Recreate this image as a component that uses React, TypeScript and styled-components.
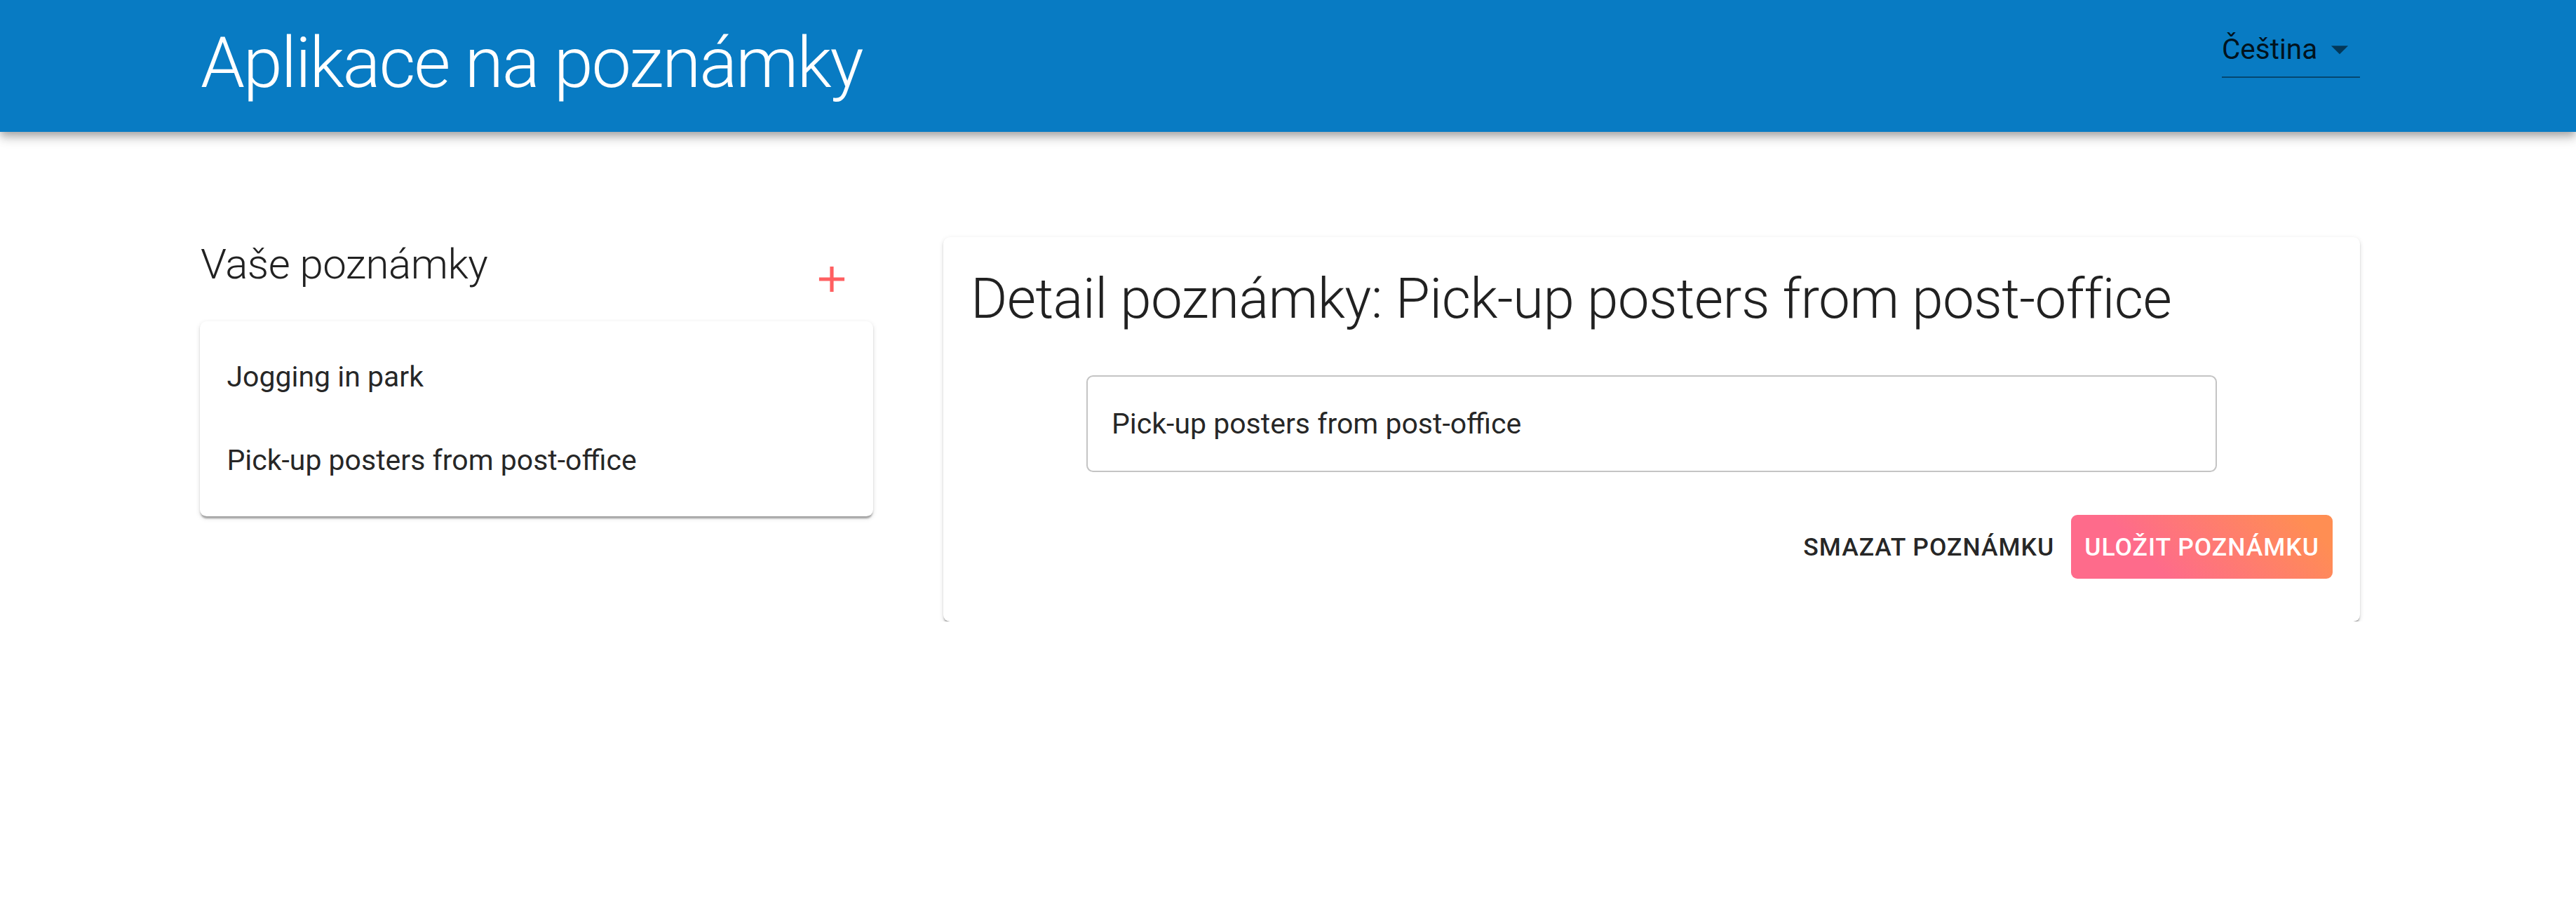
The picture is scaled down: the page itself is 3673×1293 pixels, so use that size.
import React from "react";
import styled, { createGlobalStyle } from "styled-components";

const GlobalStyle = createGlobalStyle`
  html, body {
    margin: 0;
    padding: 0;
    background: #ffffff;
    font-family: Roboto, "Noto Sans", "Liberation Sans", sans-serif;
    color: rgba(0, 0, 0, 0.87);
  }
  * { box-sizing: border-box; }
`;

const AppBar = styled.header`
  position: relative;
  z-index: 2;
  height: 188px;
  background: #087bc3;
  box-shadow: 0 5px 10px -2px rgba(0, 0, 0, 0.2), 0 10px 12px 0 rgba(0, 0, 0, 0.14),
    0 2px 24px 0 rgba(0, 0, 0, 0.12);
`;

const Container = styled.div`
  width: 3080px;
  margin-left: 285px;
`;

const Toolbar = styled(Container)`
  display: flex;
  justify-content: space-between;
  align-items: flex-start;
  padding-top: 32px;
`;

const AppTitle = styled.h1`
  margin: -1px 0 0 1px;
  font-size: 101px;
  font-weight: 300;
  line-height: 118px;
  color: #ffffff;
  letter-spacing: -2.3px;
  white-space: nowrap;
`;

const LanguageSelect = styled.div`
  display: flex;
  align-items: center;
  width: 197px;
  padding: 0;
  border-bottom: 2.4px solid rgba(0, 0, 0, 0.42);
  margin-top: 1px;
`;

const LanguageValue = styled.span`
  flex: 1;
  font-size: 40.5px;
  line-height: 55px;
  padding: 10px 0 11px;
  color: rgba(0, 0, 0, 0.87);
`;

const DropIcon = styled.svg`
  width: 58px;
  height: 58px;
  fill: rgba(0, 0, 0, 0.54);
  flex: none;
  margin-top: -2px;
`;

const Main = styled(Container)`
  padding-top: 150px;
  display: grid;
  grid-template-columns: 960px 2020px;
  column-gap: 100px;
  align-items: start;
`;

const NotesColumn = styled.section`
  display: flex;
  flex-direction: column;
`;

const NotesHeader = styled.div`
  display: flex;
  justify-content: space-between;
  align-items: flex-start;
`;

const SectionTitle = styled.h2`
  margin: 0 0 0 1px;
  font-size: 60px;
  font-weight: 300;
  line-height: 77px;
  letter-spacing: -0.5px;
  color: rgba(0, 0, 0, 0.87);
`;

const AddButton = styled.button`
  width: 116px;
  height: 116px;
  margin: 2px 1px 0 0;
  padding: 0;
  border: none;
  border-radius: 50%;
  background: transparent;
  display: flex;
  align-items: center;
  justify-content: center;
  cursor: pointer;
`;

const AddIcon = styled.svg`
  width: 62px;
  height: 62px;
  fill: #ff5f61;
`;

const Paper = styled.div`
  background: #ffffff;
  border-radius: 9.6px;
  box-shadow: 0 5px 2.4px -2.4px rgba(0, 0, 0, 0.2), 0 2.4px 2.4px 0 rgba(0, 0, 0, 0.14),
    0 2.4px 7px 0 rgba(0, 0, 0, 0.12);
`;

const NotesList = styled(Paper)`
  margin-top: 2px;
  padding: 20px 0;
`;

const NoteItem = styled.div`
  height: 119px;
  padding: 0 38.4px;
  display: flex;
  align-items: center;
  font-size: 41px;
  line-height: 57.6px;
  color: rgba(0, 0, 0, 0.87);
  cursor: pointer;
`;

const DetailCard = styled(Paper)`
  padding: 39px 39px 61px;
  display: flex;
  flex-direction: column;
`;

const DetailTitle = styled.h3`
  margin: 0;
  font-size: 80px;
  font-weight: 300;
  line-height: 99px;
  letter-spacing: -0.65px;
  color: rgba(0, 0, 0, 0.87);
  white-space: nowrap;
`;

const TitleInput = styled.input`
  display: block;
  align-self: center;
  width: 1612px;
  height: 138px;
  margin-top: 59px;
  padding: 0 34px;
  border: 2.4px solid #c4c4c4;
  border-radius: 9.6px;
  font-family: Roboto, "Noto Sans", "Liberation Sans", sans-serif;
  font-size: 41px;
  color: rgba(0, 0, 0, 0.87);
  background: #ffffff;
  outline: none;
`;

const Actions = styled.div`
  display: flex;
  justify-content: flex-end;
  align-items: center;
  gap: 5px;
  margin-top: 61px;
`;

const ActionButton = styled.button<{ $primary?: boolean }>`
  height: 91px;
  padding: 0 19px;
  border: none;
  border-radius: 9px;
  font-family: Roboto, "Noto Sans", "Liberation Sans", sans-serif;
  font-size: 35.5px;
  font-weight: 500;
  letter-spacing: 1px;
  text-transform: uppercase;
  cursor: pointer;
  color: ${(p) => (p.$primary ? "#ffffff" : "rgba(0, 0, 0, 0.87)")};
  background: ${(p) =>
    p.$primary ? "linear-gradient(45deg, #fe6b8b 30%, #ff8e53 90%)" : "transparent"};
`;

const notes = ["Jogging in park", "Pick-up posters from post-office"];

export default function App() {
  const selected = notes[1];
  return (
    <>
      <GlobalStyle />
      <AppBar>
        <Toolbar>
          <AppTitle>Aplikace na poznámky</AppTitle>
          <LanguageSelect>
            <LanguageValue>Čeština</LanguageValue>
            <DropIcon viewBox="0 0 24 24">
              <path d="M7 10l5 5 5-5z" />
            </DropIcon>
          </LanguageSelect>
        </Toolbar>
      </AppBar>
      <Main>
        <NotesColumn>
          <NotesHeader>
            <SectionTitle>Vaše poznámky</SectionTitle>
            <AddButton aria-label="add">
              <AddIcon viewBox="0 0 24 24">
                <path d="M19 13h-6v6h-2v-6H5v-2h6V5h2v6h6v2z" />
              </AddIcon>
            </AddButton>
          </NotesHeader>
          <NotesList>
            {notes.map((n) => (
              <NoteItem key={n}>{n}</NoteItem>
            ))}
          </NotesList>
        </NotesColumn>
        <DetailCard>
          <DetailTitle>Detail poznámky: {selected}</DetailTitle>
          <TitleInput defaultValue={selected} readOnly />
          <Actions>
            <ActionButton>Smazat poznámku</ActionButton>
            <ActionButton $primary>Uložit poznámku</ActionButton>
          </Actions>
        </DetailCard>
      </Main>
    </>
  );
}
